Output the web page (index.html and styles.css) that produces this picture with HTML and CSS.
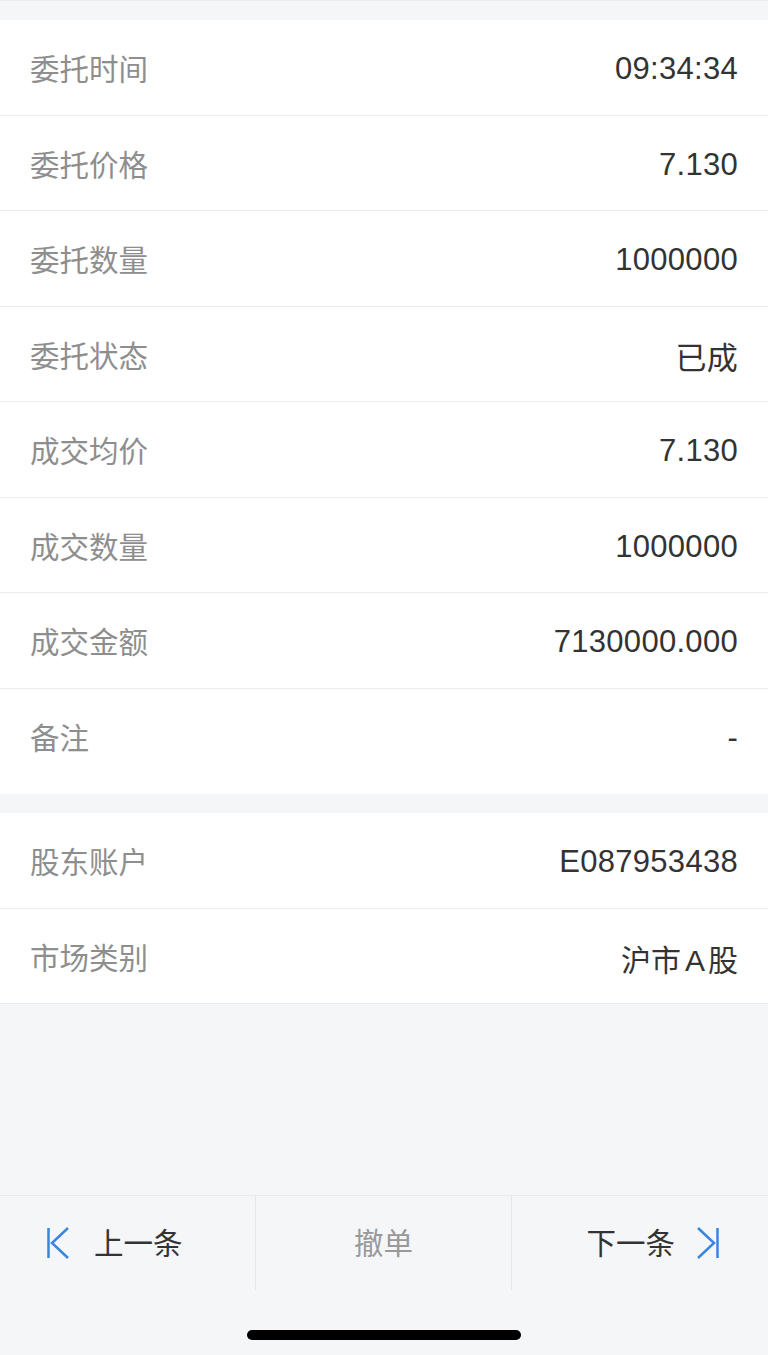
FILE: index.html
```html
<!DOCTYPE html>
<html lang="zh-CN">
<head>
    <meta charset="UTF-8">
    <meta name="viewport" content="width=device-width, initial-scale=1.0">
    <title>委托详情</title>
    <link rel="stylesheet" href="styles.css">
</head>
<body>
    <div class="page">
        <div class="main">
            <div class="section first">
                <div class="row"><span class="label">委托时间</span><span class="value">09:34:34</span></div>
                <div class="row"><span class="label">委托价格</span><span class="value">7.130</span></div>
                <div class="row"><span class="label">委托数量</span><span class="value">1000000</span></div>
                <div class="row"><span class="label">委托状态</span><span class="value">已成</span></div>
                <div class="row"><span class="label">成交均价</span><span class="value">7.130</span></div>
                <div class="row"><span class="label">成交数量</span><span class="value">1000000</span></div>
                <div class="row"><span class="label">成交金额</span><span class="value">7130000.000</span></div>
                <div class="row last"><span class="label">备注</span><span class="value">-</span></div>
            </div>
            <div class="section">
                <div class="row"><span class="label">股东账户</span><span class="value">E087953438</span></div>
                <div class="row"><span class="label">市场类别</span><span class="value cjk">沪市<span class="latin">A</span>股</span></div>
            </div>
        </div>

        <div class="toolbar">
            <div class="buttons">
                <div class="btn prev">
                    <svg class="icon" width="24" height="32" viewBox="0 0 24 32">
                        <line x1="2.5" y1="1" x2="2.5" y2="31" />
                        <polyline points="22,1 6,16 22,31" />
                    </svg>
                    <span>上一条</span>
                </div>
                <div class="btn cancel"><span>撤单</span></div>
                <div class="btn next">
                    <span>下一条</span>
                    <svg class="icon" width="24" height="32" viewBox="0 0 24 32">
                        <polyline points="2,1 18,16 2,31" />
                        <line x1="21.5" y1="1" x2="21.5" y2="31" />
                    </svg>
                </div>
            </div>
            <div class="home-area">
                <div class="home-indicator"></div>
            </div>
        </div>
    </div>
</body>
</html>
```

FILE: styles.css
```css
body {
    margin: 0;
    background-color: #f5f6f8;
    font-family: "Liberation Sans", "Noto Sans CJK SC", sans-serif;
}
.page {
    display: flex;
    flex-direction: column;
    min-height: 100vh;
    border-top: 1px solid #eceef1;
    box-sizing: border-box;
}
.main {
    flex: 1;
    padding-top: 19px;
}
.section {
    background: #fff;
}
.section.first {
    padding-bottom: 10.5px;
    margin-bottom: 19px;
}
.row {
    display: flex;
    align-items: center;
    justify-content: space-between;
    height: 95.5px;
    box-sizing: border-box;
    padding: 0 30px;
    border-bottom: 1px solid #ebebeb;
}
.row.last {
    height: 95px;
    border-bottom: none;
}
.label {
    font-family: "Noto Sans CJK SC", sans-serif;
    font-size: 29.5px;
    color: #8e8e8e;
}
.value {
    font-size: 31px;
    color: #333;
    padding-top: 4px;
    letter-spacing: 0.3px;
}
.value.cjk {
    font-size: 30px;
    letter-spacing: 0;
}
.latin {
    margin: 0 3px 0 4px;
}
.toolbar {
    border-top: 1px solid #e8e9eb;
    background-color: #f5f6f8;
}
.buttons {
    display: grid;
    grid-template-columns: 1fr 1fr 1fr;
    height: 94px;
}
.btn {
    display: flex;
    align-items: center;
    font-family: "Noto Sans CJK SC", sans-serif;
    font-size: 29.5px;
    color: #333;
    border-right: 1px solid #e5e6e8;
}
.btn span {
    padding-bottom: 4px;
}
.btn:last-child {
    border-right: none;
}
.btn.prev {
    padding-left: 46px;
    gap: 24px;
}
.btn.cancel {
    justify-content: center;
    color: #999;
}
.btn.next {
    justify-content: flex-end;
    padding-right: 48px;
    gap: 21px;
}
.icon {
    fill: none;
    stroke: #3a86de;
    stroke-width: 2.5;
}
.home-area {
    height: 65px;
    display: flex;
    justify-content: center;
}
.home-indicator {
    margin-top: 40px;
    width: 274px;
    height: 10px;
    border-radius: 5px;
    background: #000;
}
```
